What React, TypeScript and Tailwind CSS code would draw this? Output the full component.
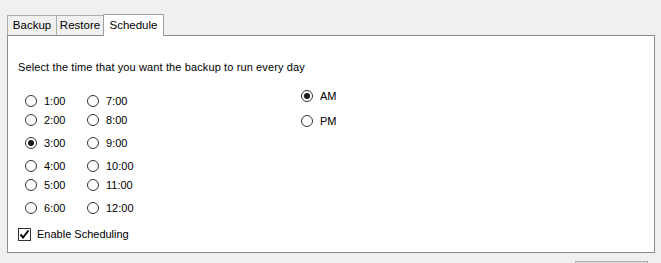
import React from "react";

const font = { fontFamily: '"Liberation Sans", Arial, sans-serif' };

function Radio({ checked }: { checked?: boolean }) {
  return (
    <span className="flex h-[12px] w-[12px] shrink-0 items-center justify-center rounded-full border border-[#333333] bg-white">
      {checked && <span className="h-[6px] w-[6px] rounded-full bg-[#1a1a1a]" />}
    </span>
  );
}

function RadioItem({ label, checked, w }: { label: string; checked?: boolean; w?: string }) {
  return (
    <div className={`flex items-center gap-[7px] ${w ?? ""}`}>
      <Radio checked={checked} />
      <span className="text-[11px] leading-[13px] text-black">{label}</span>
    </div>
  );
}

const rows: { a: string; b: string; mt: string; ca?: boolean }[] = [
  { a: "1:00", b: "7:00", mt: "mt-[5px]" },
  { a: "2:00", b: "8:00", mt: "mt-[1px]" },
  { a: "3:00", b: "9:00", mt: "mt-[5px]", ca: true },
  { a: "4:00", b: "10:00", mt: "mt-[5px]" },
  { a: "5:00", b: "11:00", mt: "mt-[1px]" },
  { a: "6:00", b: "12:00", mt: "mt-[5px]" },
];

export default function App() {
  return (
    <div className="relative h-[263px] w-[661px] overflow-hidden bg-[#f0f0f0]" style={font}>
      {/* tabs */}
      <div className="flex items-end pl-[7px] pt-[14px]">
        <div className="flex h-[20px] w-[50px] items-center justify-center border border-b-0 border-[#acacac] bg-[#f0f0f0] text-[11.5px] text-black">
          Backup
        </div>
        <div className="-ml-px flex h-[20px] w-[48px] items-center justify-center border border-b-0 border-[#acacac] bg-[#f0f0f0] text-[11.5px] text-black">
          Restore
        </div>
        <div className="relative z-10 -mb-px -ml-px flex h-[22px] w-[61px] items-start justify-center border border-b-0 border-[#a0a0a0] bg-white pt-[2px] text-[11.5px] text-black">
          Schedule
        </div>
      </div>
      {/* panel */}
      <div className="ml-[7px] h-[218px] w-[648px] border border-[#898c95] bg-white">
        <div className="pl-[10px] pt-[25px] text-[11px] leading-[13px] tracking-[0.12px] text-black">
          Select the time that you want the backup to run every day
        </div>
        <div className="mt-[13px] flex">
          <div className="flex w-[293px] flex-col pl-[17px]">
            {rows.map((r) => (
              <div key={r.a} className={`flex h-[18px] items-center ${r.mt}`}>
                <RadioItem label={r.a} checked={r.ca} w="w-[62px]" />
                <RadioItem label={r.b} />
              </div>
            ))}
          </div>
          <div className="flex flex-col">
            <div className="flex h-[18px] items-center">
              <RadioItem label="AM" checked />
            </div>
            <div className="mt-[7px] flex h-[18px] items-center">
              <RadioItem label="PM" />
            </div>
          </div>
        </div>
        <div className="mt-[8px] flex h-[18px] items-center gap-[6px] pl-[10px]">
          <span className="flex h-[13px] w-[13px] items-center justify-center border border-[#333333] bg-white">
            <svg width="11" height="11" viewBox="0 0 11 11">
              <path d="M1.5 5.5 L4 8.5 L9.5 1.5" fill="none" stroke="#000" strokeWidth="2" />
            </svg>
          </span>
          <span className="text-[11px] leading-[13px] text-black">Enable Scheduling</span>
        </div>
      </div>
      {/* button partially visible */}
      <div className="ml-[575px] mt-[8px] h-[24px] w-[73px] border border-[#adadad] bg-[#e1e1e1]" />
    </div>
  );
}
